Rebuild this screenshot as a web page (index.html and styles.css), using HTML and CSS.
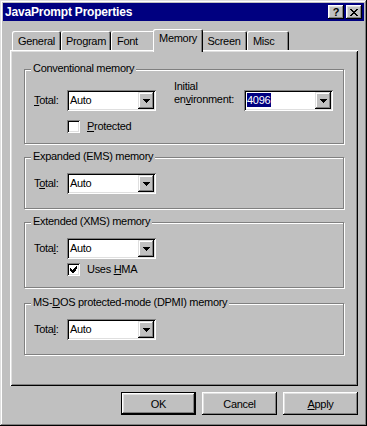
FILE: index.html
```html
<!DOCTYPE html>
<html lang="en">
<head>
    <meta charset="UTF-8">
    <title>JavaPrompt Properties</title>
    <link rel="stylesheet" href="styles.css">
</head>
<body>
    <div class="window">
        <div class="titlebar">
            <span class="title">JavaPrompt Properties</span>
            <div class="caption-buttons">
                <button class="cap-btn help">?</button>
                <button class="cap-btn">
                    <svg width="8" height="7" viewBox="0 0 8 7" shape-rendering="crispEdges">
                        <path d="M0 0h2v1h-2zM6 0h2v1h-2zM1 1h2v1h-2zM5 1h2v1h-2zM2 2h4v1h-4zM3 3h2v1h-2zM2 4h4v1h-4zM1 5h2v1h-2zM5 5h2v1h-2zM0 6h2v1h-2zM6 6h2v1h-2z" fill="#000"/>
                    </svg>
                </button>
            </div>
        </div>

        <div class="content">
            <div class="tabs">
                <div class="tab tab-general">General</div>
                <div class="tab tab-program">Program</div>
                <div class="tab tab-font">Font</div>
                <div class="tab tab-memory active">Memory</div>
                <div class="tab tab-screen">Screen</div>
                <div class="tab tab-misc">Misc</div>
            </div>

            <div class="panel">
                <div class="group group-conv">
                    <div class="legend">Conventional memory</div>
                    <div class="conv-row">
                        <div class="field">
                            <span class="field-label"><u>T</u>otal:</span>
                            <div class="combo">
                                <span class="combo-value">Auto</span>
                                <span class="combo-btn"><svg width="7" height="4" viewBox="0 0 7 4" shape-rendering="crispEdges"><path d="M0 0h7v1h-7zM1 1h5v1h-5zM2 2h3v1h-3zM3 3h1v1h-1z" fill="#000"/></svg></span>
                            </div>
                        </div>
                        <span class="env-label">Initial<br>en<u>v</u>ironment:</span>
                        <div class="combo">
                            <span class="combo-value"><span class="selected">4096</span></span>
                            <span class="combo-btn"><svg width="7" height="4" viewBox="0 0 7 4" shape-rendering="crispEdges"><path d="M0 0h7v1h-7zM1 1h5v1h-5zM2 2h3v1h-3zM3 3h1v1h-1z" fill="#000"/></svg></span>
                        </div>
                    </div>
                    <div class="check check-protected">
                        <span class="check-box"></span>
                        <span><u>P</u>rotected</span>
                    </div>
                </div>

                <div class="group group-ems">
                    <div class="legend">Expanded (EMS) memory</div>
                    <div class="field field-top">
                        <span class="field-label">T<u>o</u>tal:</span>
                        <div class="combo">
                            <span class="combo-value">Auto</span>
                            <span class="combo-btn"><svg width="7" height="4" viewBox="0 0 7 4" shape-rendering="crispEdges"><path d="M0 0h7v1h-7zM1 1h5v1h-5zM2 2h3v1h-3zM3 3h1v1h-1z" fill="#000"/></svg></span>
                        </div>
                    </div>
                </div>

                <div class="group group-xms">
                    <div class="legend">Extended (XMS) memory</div>
                    <div class="field field-top">
                        <span class="field-label">Tota<u>l</u>:</span>
                        <div class="combo">
                            <span class="combo-value">Auto</span>
                            <span class="combo-btn"><svg width="7" height="4" viewBox="0 0 7 4" shape-rendering="crispEdges"><path d="M0 0h7v1h-7zM1 1h5v1h-5zM2 2h3v1h-3zM3 3h1v1h-1z" fill="#000"/></svg></span>
                        </div>
                    </div>
                    <div class="check check-hma">
                        <span class="check-box">
                            <svg width="7" height="7" viewBox="0 0 7 7" shape-rendering="crispEdges">
                                <path d="M6 0h1v3h-1zM5 1h1v4h-1zM4 2h1v4h-1zM3 3h1v4h-1zM2 4h1v3h-1zM1 3h1v3h-1zM0 2h1v3h-1z" fill="#000"/>
                            </svg>
                        </span>
                        <span>Uses <u>H</u>MA</span>
                    </div>
                </div>

                <div class="group group-dpmi">
                    <div class="legend">MS-<u>D</u>OS protected-mode (DPMI) memory</div>
                    <div class="field field-top">
                        <span class="field-label">Tota<u>l</u>:</span>
                        <div class="combo">
                            <span class="combo-value">Auto</span>
                            <span class="combo-btn"><svg width="7" height="4" viewBox="0 0 7 4" shape-rendering="crispEdges"><path d="M0 0h7v1h-7zM1 1h5v1h-5zM2 2h3v1h-3zM3 3h1v1h-1z" fill="#000"/></svg></span>
                        </div>
                    </div>
                </div>
            </div>

            <div class="actions">
                <button class="btn default">OK</button>
                <button class="btn">Cancel</button>
                <button class="btn"><u>A</u>pply</button>
            </div>
        </div>
    </div>
</body>
</html>
```

FILE: styles.css
```css
body {
    margin: 0;
    background: #c0c0c0;
    font-family: "Liberation Sans", Arial, sans-serif;
    font-size: 11px;
    letter-spacing: -0.3px;
    color: #000;
}
u {
    text-decoration: underline;
    text-underline-offset: 1px;
}
.window {
    width: 367px;
    height: 426px;
    box-sizing: border-box;
    padding: 3px;
    background: #c0c0c0;
    box-shadow: inset -1px -1px #000, inset 1px 1px #dfdfdf, inset -2px -2px #808080, inset 2px 2px #fff;
}
.titlebar {
    height: 18px;
    background: #000080;
    display: flex;
    align-items: center;
    justify-content: space-between;
    padding: 0 2px;
}
.title {
    color: #fff;
    font-weight: bold;
    font-size: 12px;
    letter-spacing: -0.2px;
    line-height: 18px;
}
.caption-buttons {
    display: flex;
    gap: 2px;
}
.cap-btn {
    width: 16px;
    height: 14px;
    padding: 0;
    border: none;
    background: #c0c0c0;
    box-shadow: inset -1px -1px #000, inset 1px 1px #fff, inset -2px -2px #808080, inset 2px 2px #dfdfdf;
    display: flex;
    align-items: center;
    justify-content: center;
    font-family: "Liberation Sans", Arial, sans-serif;
    font-weight: bold;
    font-size: 11px;
    line-height: 12px;
    color: #000;
}
.cap-btn svg {
    display: block;
}
.content {
    padding: 0 6px 0 7px;
}
.tabs {
    display: flex;
    align-items: flex-end;
    height: 21px;
    margin-top: 8px;
    padding-left: 2px;
}
.tab {
    height: 19px;
    box-sizing: border-box;
    padding-top: 4px;
    text-align: center;
    line-height: 13px;
    background: #c0c0c0;
    border-radius: 2px 2px 0 0;
    box-shadow: inset 1px 1px #fff, inset -1px 0 #000, inset -2px 0 #808080;
}
.tab-general { width: 49px; }
.tab-program { width: 50px; }
.tab-font { width: 44px; text-align: left; padding-left: 6px; }
.tab-screen { width: 46px; }
.tab-misc { width: 42px; text-align: left; padding-left: 6px; }
.tab.active {
    width: 50px;
    height: 23px;
    margin: 0 -2px -2px;
    padding-top: 3px;
    position: relative;
    z-index: 1;
}
.tab-memory {
    margin-left: 0;
}
.panel {
    width: 348px;
    height: 336px;
    box-sizing: border-box;
    padding: 19px 14px 0;
    box-shadow: inset 1px 1px #fff, inset -1px -1px #000, inset 2px 2px #dfdfdf, inset -2px -2px #808080;
}
.group {
    box-sizing: border-box;
    border: 1px solid #808080;
    box-shadow: 1px 1px #fff, inset 1px 1px #fff;
    padding: 0 9px 0 9px;
}
.group-conv { height: 75px; }
.group-ems { height: 52px; margin-top: 13px; }
.group-xms { height: 66px; margin-top: 13px; }
.group-dpmi { height: 52px; margin-top: 15px; }
.legend {
    width: fit-content;
    margin: -8px 0 0 -3px;
    padding: 0 2px;
    line-height: 13px;
    background: #c0c0c0;
}
.conv-row {
    display: flex;
    align-items: flex-end;
    margin-top: 5px;
}
.field {
    display: flex;
    align-items: center;
}
.field-top {
    margin-top: 10px;
}
.field-label {
    width: 33px;
    line-height: 13px;
}
.env-label {
    width: 70px;
    margin: 0 0 5px 18px;
    line-height: 13px;
}
.combo {
    width: 89px;
    height: 21px;
    box-sizing: border-box;
    padding: 2px;
    display: flex;
    background: #fff;
    box-shadow: inset 1px 1px #808080, inset -1px -1px #fff, inset 2px 2px #000, inset -2px -2px #dfdfdf;
}
.combo-value {
    flex: 1;
    padding-left: 1px;
    line-height: 17px;
}
.selected {
    background: #000080;
    color: #fff;
    padding: 1px 1px 1px 0;
}
.combo-btn {
    width: 16px;
    height: 17px;
    background: #c0c0c0;
    box-shadow: inset -1px -1px #000, inset 1px 1px #dfdfdf, inset -2px -2px #808080, inset 2px 2px #fff;
    display: flex;
    align-items: center;
    justify-content: center;
}
.combo-btn svg {
    display: block;
}
.check {
    display: flex;
    align-items: center;
    gap: 7px;
    margin-left: 33px;
    line-height: 13px;
}
.check-protected {
    margin-top: 9px;
}
.check-hma {
    margin-top: 4px;
}
.check-box {
    width: 13px;
    height: 13px;
    box-sizing: border-box;
    background: #fff;
    box-shadow: inset 1px 1px #808080, inset -1px -1px #fff, inset 2px 2px #000, inset -2px -2px #dfdfdf;
    display: flex;
    align-items: center;
    justify-content: center;
}
.check-box svg {
    display: block;
}
.actions {
    display: flex;
    justify-content: flex-end;
    gap: 6px;
    width: 348px;
    margin-top: 6px;
}
.btn {
    width: 75px;
    height: 23px;
    padding: 0;
    border: none;
    background: #c0c0c0;
    font-family: "Liberation Sans", Arial, sans-serif;
    font-size: 11px;
    letter-spacing: -0.3px;
    color: #000;
    box-shadow: inset -1px -1px #000, inset 1px 1px #fff, inset -2px -2px #808080, inset 2px 2px #dfdfdf;
}
.btn.default {
    box-shadow: inset 0 0 0 1px #000, inset -2px -2px #000, inset 2px 2px #fff, inset -3px -3px #808080, inset 3px 3px #dfdfdf;
}
```
